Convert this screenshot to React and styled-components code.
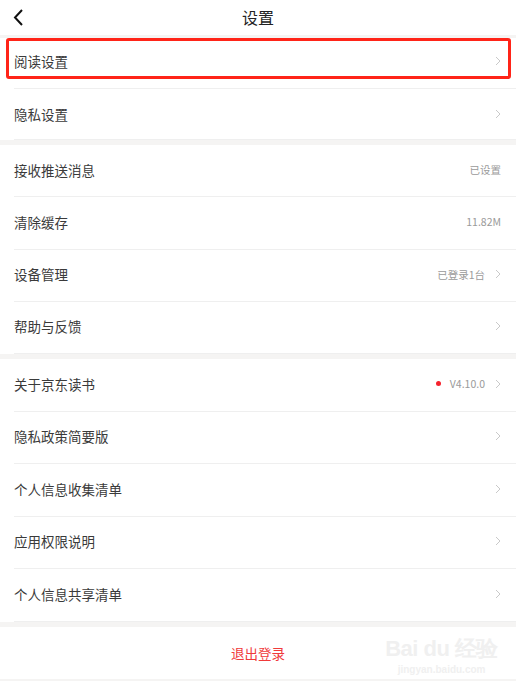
import React from "react";
import styled, { createGlobalStyle } from "styled-components";

const GlobalStyle = createGlobalStyle`
  html, body {
    margin: 0;
    padding: 0;
    background: #f5f4f3;
    font-family: "Noto Sans CJK SC", "Noto Sans", sans-serif;
  }
`;

const Page = styled.div`
  width: 516px;
  height: 681px;
  background: #f5f4f3;
  display: flex;
  flex-direction: column;
  position: relative;
  overflow: hidden;
`;

const Header = styled.div`
  height: 35px;
  background: #fff;
  display: flex;
  align-items: center;
  justify-content: center;
  position: relative;
  margin-bottom: 3px;
`;

const BackButton = styled.div`
  position: absolute;
  left: 12px;
  top: 8px;
  width: 14px;
  height: 20px;
`;

const Title = styled.div`
  font-size: 16px;
  line-height: 16px;
  color: #222;
  margin-top: -1px;
`;

const Section = styled.div`
  background: #fff;
  margin-bottom: ${(p) => p.gap || 0}px;
`;

const Row = styled.div`
  position: relative;
  padding-left: 14px;
`;

const RowInner = styled.div`
  height: ${(p) => p.h || 52}px;
  box-sizing: border-box;
  border-bottom: 1px solid #efefef;
  display: flex;
  align-items: center;
  justify-content: space-between;
  padding-right: 15px;
  padding-bottom: ${(p) => p.pb ?? 2}px;
`;

const Label = styled.span`
  font-size: 13.5px;
  line-height: 14px;
  color: #3a3a3a;
`;

const Right = styled.div`
  display: flex;
  align-items: center;
  gap: 10px;
`;

const Value = styled.span`
  font-size: 10.5px;
  line-height: 11px;
  color: #9a9a9a;
  display: flex;
  align-items: center;
  gap: 9px;
`;

const Dot = styled.span`
  width: 5px;
  height: 5px;
  border-radius: 50%;
  background: #f5222d;
`;

const Highlight = styled.div`
  position: absolute;
  left: 6px;
  right: 5px;
  top: 0;
  height: 41px;
  border: 3px solid #ff2418;
  border-radius: 3px;
  box-sizing: border-box;
`;

const Logout = styled.div`
  background: #fff;
  height: 52.5px;
  display: flex;
  align-items: center;
  justify-content: center;
  font-size: 13.5px;
  line-height: 14px;
  color: #f03a3a;
`;

const Watermark = styled.div`
  position: absolute;
  right: 18px;
  bottom: 6px;
  display: flex;
  flex-direction: column;
  align-items: center;
  color: #f0f0f0;
  font-family: "Liberation Sans", sans-serif;
  pointer-events: none;
`;

const MarkTop = styled.div`
  font-size: 22px;
  font-weight: bold;
  letter-spacing: -0.5px;
`;

const MarkBottom = styled.div`
  font-size: 10px;
  font-weight: bold;
`;

const Chevron = () => (
  <svg width="6" height="10" viewBox="0 0 6 10">
    <polyline points="1,1 5,5 1,9" fill="none" stroke="#c9c9c9" strokeWidth="1" />
  </svg>
);

const BackIcon = () => (
  <svg width="14" height="20" viewBox="0 0 14 20">
    <polyline points="10,2 3,9.5 10,17" fill="none" stroke="#111" strokeWidth="2" />
  </svg>
);

const SettingRow = ({ label, value, dot, arrow = true, highlight, h, pb }) => (
  <Row>
    {highlight && <Highlight />}
    <RowInner h={h} pb={pb}>
      <Label>{label}</Label>
      <Right>
        {value && (
          <Value>
            {dot && <Dot />}
            {value}
          </Value>
        )}
        {arrow && <Chevron />}
      </Right>
    </RowInner>
  </Row>
);

function App() {
  return (
    <Page>
      <GlobalStyle />
      <Header>
        <BackButton>
          <BackIcon />
        </BackButton>
        <Title>设置</Title>
      </Header>
      <Section gap={5}>
        <SettingRow label="阅读设置" highlight h={51} pb={5} />
        <SettingRow label="隐私设置" h={51} pb={1} />
      </Section>
      <Section gap={5}>
        <SettingRow label="接收推送消息" value="已设置" arrow={false} h={52.25} />
        <SettingRow label="清除缓存" value="11.82M" arrow={false} h={52.25} />
        <SettingRow label="设备管理" value="已登录1台" h={52.25} />
        <SettingRow label="帮助与反馈" h={52.25} />
      </Section>
      <Section gap={5}>
        <SettingRow label="关于京东读书" value="V4.10.0" dot h={52.5} />
        <SettingRow label="隐私政策简要版" h={52.5} />
        <SettingRow label="个人信息收集清单" h={52.5} />
        <SettingRow label="应用权限说明" h={52.5} />
        <SettingRow label="个人信息共享清单" h={52.5} />
      </Section>
      <Logout>退出登录</Logout>
      <Watermark>
        <MarkTop>Bai du 经验</MarkTop>
        <MarkBottom>jingyan.baidu.com</MarkBottom>
      </Watermark>
    </Page>
  );
}

export default App;
